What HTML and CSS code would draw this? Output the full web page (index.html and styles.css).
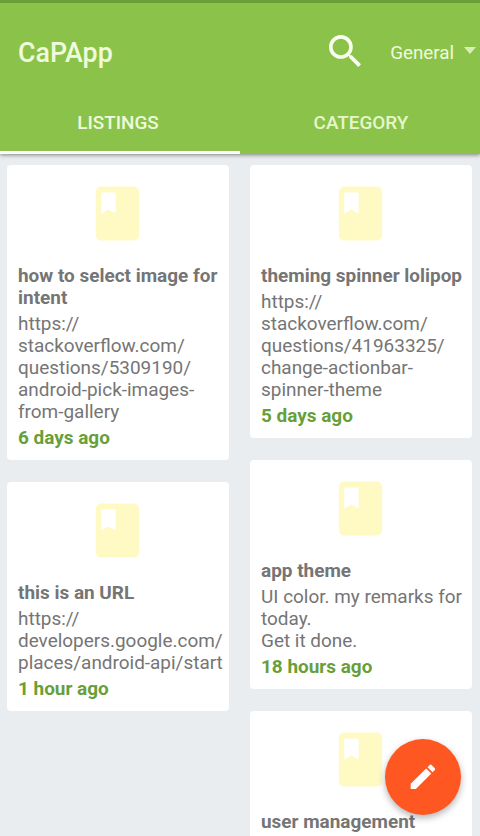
FILE: index.html
```html
<!DOCTYPE html>
<html lang="en">
<head>
<meta charset="utf-8">
<title>CaPApp</title>
<link rel="stylesheet" href="styles.css">
</head>
<body>
<svg class="defs" width="0" height="0"><symbol id="book" viewBox="0 0 24 24"><path d="M18 2H6c-1.1 0-2 .9-2 2v16c0 1.100.9 2 2 2h12c1.100 0 2-.9 2-2V4c0-1.100-.9-2-2-2zM6 4.200h5.300v7.800l-2.650-1.500L6 12V4.200z"/></symbol></svg>
<header class="appbar">
  <div class="toolbar">
    <h1 class="brand">CaPApp</h1>
    <svg class="search" viewBox="3 3 17.490 17.490"><path d="M15.500 14h-.79l-.28-.27C15.410 12.590 16 11.110 16 9.500 16 5.910 13.090 3 9.500 3S3 5.910 3 9.500 5.910 16 9.500 16c1.610 0 3.090-.59 4.230-1.570l.27.28v.79l5 4.990L20.490 19l-4.990-5zm-6 0C7.010 14 5 11.990 5 9.500S7.010 5 9.500 5 14 7.010 14 9.500 11.990 14 9.500 14z"/></svg>
    <div class="spinner"><span>General</span><i class="caret"></i></div>
  </div>
  <nav class="tabs">
    <a class="tab active">LISTINGS</a>
    <a class="tab">CATEGORY</a>
  </nav>
</header>
<main class="board">
  <div class="column">
    <article class="card">
      <svg class="book"><use href="#book"/></svg>
      <h2 class="title">how to select image for<br>intent</h2>
      <p class="text">https://<br>stackoverflow.com/<br>questions/5309190/<br>android-pick-images-<br>from-gallery</p>
      <p class="time">6 days ago</p>
    </article>
    <article class="card">
      <svg class="book"><use href="#book"/></svg>
      <h2 class="title">this is an URL</h2>
      <p class="text">https://<br>developers.google.com/<br>places/android-api/start</p>
      <p class="time">1 hour ago</p>
    </article>
  </div>
  <div class="column">
    <article class="card">
      <svg class="book"><use href="#book"/></svg>
      <h2 class="title">theming spinner lolipop</h2>
      <p class="text">https://<br>stackoverflow.com/<br>questions/41963325/<br>change-actionbar-<br>spinner-theme</p>
      <p class="time">5 days ago</p>
    </article>
    <article class="card">
      <svg class="book"><use href="#book"/></svg>
      <h2 class="title">app theme</h2>
      <p class="text">UI color. my remarks for<br>today.<br>Get it done.</p>
      <p class="time">18 hours ago</p>
    </article>
    <article class="card last">
      <svg class="book"><use href="#book"/></svg>
      <h2 class="title">user management</h2>
    </article>
  </div>
</main>
<div class="fab"><svg viewBox="0 0 26 26"><path d="M.7 19.800v4.700q0 .5.500.5h4.700L21.300 9.600 16.200 4.500zM17.500 3.200l2.200-2.200q.9-.8 1.800 0l3.300 3.300q.8.9 0 1.700L22.600 8.300z"/></svg></div>
</body>
</html>
```
FILE: styles.css
```css
* { box-sizing: border-box; margin: 0; padding: 0; }
body {
  height: 836px;
  overflow: hidden;
  background: #e9edf0;
  font-family: Roboto, "Liberation Sans", sans-serif;
  font-size: 18.95px;
  line-height: 22px;
  color: #757575;
}
.defs { display: block; }
.appbar {
  height: 154px;
  border-top: 3px solid #689f38;
  background: #8bc34a;
  color: #f0fbdc;
  box-shadow: 0 1px 4px rgba(0, 0, 0, .45);
}
.toolbar { display: flex; align-items: center; height: 98px; padding: 0 4px 0 18px; }
.brand { flex: 1; padding-top: 2px; font-size: 26.8px; line-height: 32px; font-weight: 500; }
.search { width: 32px; height: 32px; margin: -2px 29px 0 0; fill: #fafff0; }
.spinner { display: flex; align-items: center; gap: 9px; font-size: 18.8px; padding-top: 1px; }
.spinner span { margin-right: 1px; }
.caret { border: 6.500px solid transparent; border-top: 7px solid #d6efb2; border-bottom: 0; margin-top: -4px; }
.tabs { display: flex; height: 53px; }
.tab {
  flex: 0 0 240px;
  height: 53px;
  padding: 11px 0 0 2px;
  border-bottom: 3px solid transparent;
  text-align: center;
  font-size: 18.9px;
  font-weight: 500;
  color: #e6f6cc;
}
.tab.active { border-color: #fff; padding: 11px 4px 0 0; color: #edfadc; }
.board { display: flex; gap: 21px; padding: 11px 8px 0 7px; }
.column { display: flex; flex-direction: column; gap: 22px; width: 222px; }
.card { padding: 16px 0 11px 11px; border-radius: 4px; background: #fff; white-space: nowrap; }
.book { display: block; width: 65px; height: 65px; margin: 0 0 19px 67px; fill: #fff9c4; }
.title { font-size: 18.95px; font-weight: 700; line-height: 22px; margin-bottom: 4px; }
.text { margin-bottom: 4px; }
.time { font-weight: 700; color: #689f38; }
.last { height: 160px; }
.fab {
  position: absolute;
  left: 385px;
  top: 739px;
  display: flex;
  align-items: center;
  justify-content: center;
  width: 76px;
  height: 76px;
  border-radius: 50%;
  background: #ff5722;
  box-shadow: 0 3px 7px rgba(0, 0, 0, .3);
}
.fab svg { width: 26px; height: 26px; fill: #fff; }
```
